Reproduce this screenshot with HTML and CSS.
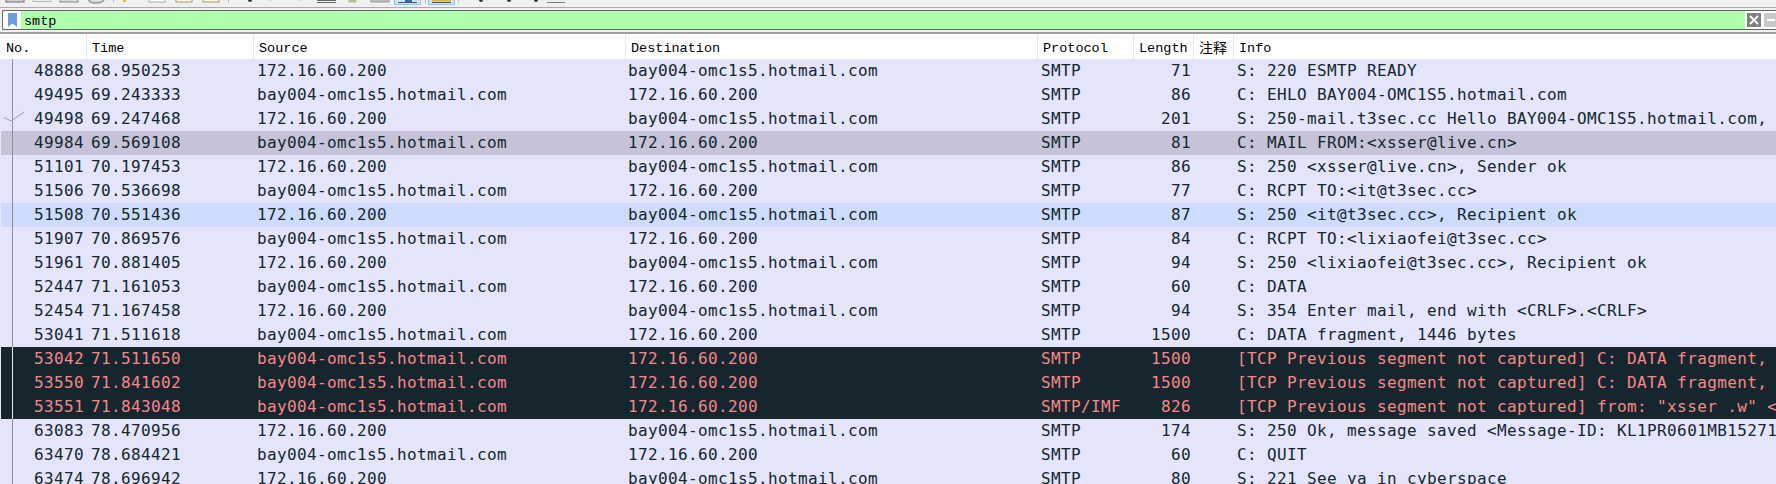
FILE: index.html
```html
<!DOCTYPE html>
<html lang="en">
<head>
<meta charset="utf-8">
<title>smtp</title>
<link rel="stylesheet" href="styles.css">
</head>
<body>
<div class="toolbar">
  <svg class="toolbar-icons" width="600" height="7" viewBox="0 0 600 7">
    <rect x="6" y="-2" width="18" height="4" fill="#cfcfcf" stroke="#6e6e6e"/>
    <rect x="33" y="-2" width="18" height="3.500" fill="#ececec" stroke="#b8b8b8"/>
    <rect x="60" y="-2" width="18" height="4" fill="#dcdcdc" stroke="#8a8a8a"/>
    <path d="M88.500 0C91 4 101 4 104 0" fill="#ddd" stroke="#999" stroke-width="1.500"/>
    <rect x="113" y="0" width="1" height="3" fill="#c0c0c0"/>
    <rect x="123" y="0" width="3" height="2" fill="#eebd44"/>
    <rect x="149" y="-2" width="16" height="4" fill="#fff" stroke="#a8a8a8"/>
    <rect x="176" y="-2" width="16" height="4" fill="#fff8dc" stroke="#a09a80"/>
    <rect x="203" y="-2" width="16" height="4" fill="#fff8dc" stroke="#a09a80"/>
    <rect x="228" y="0" width="1" height="3" fill="#c0c0c0"/>
    <circle cx="250" cy="0" r="2" fill="#333"/>
    <circle cx="270" cy="0" r="1" fill="#ccc"/>
    <circle cx="300" cy="0" r="1" fill="#ccc"/>
    <rect x="317" y="0" width="19" height="1" fill="#666"/>
    <rect x="317" y="2" width="19" height="1" fill="#666"/>
    <rect x="349" y="-1" width="7" height="3" fill="#9dc87a" stroke="#b8b8b8"/>
    <rect x="371" y="-1" width="18" height="3" fill="#bdbdbd" stroke="#999"/>
    <rect x="394.500" y="-2" width="26" height="6.500" fill="#cce4f7" stroke="#8cc4ef"/>
    <rect x="398" y="2" width="19" height="1" fill="#555"/>
    <rect x="405" y="0" width="7" height="2" fill="#2a6cb0"/>
    <rect x="425" y="0" width="1" height="4" fill="#c8c8c8"/>
    <rect x="428.500" y="-2" width="26" height="6.500" fill="#cce4f7" stroke="#8cc4ef"/>
    <rect x="432" y="0" width="19" height="1.500" fill="#dcb440"/>
    <rect x="432" y="2" width="19" height="1" fill="#555"/>
    <rect x="458" y="0" width="1" height="3" fill="#c0c0c0"/>
    <circle cx="481" cy="0" r="2" fill="#333"/>
    <circle cx="509" cy="0" r="2" fill="#333"/>
    <circle cx="536" cy="0" r="2" fill="#333"/>
    <rect x="547" y="2" width="18" height="1" fill="#777"/>
  </svg>
</div>
<div class="filter">
  <span class="bookmark"><svg width="9" height="14" viewBox="0 0 9 14"><path d="M0 0H9V14L4.500 10.500L0 14Z" fill="#6a9fdc"/></svg></span>
  <span class="filter-text">smtp</span>
  <span class="filter-actions">
    <span class="filter-x"><svg width="14" height="14" viewBox="0 0 14 14"><path d="M3 3L11 11M11 3L3 11" stroke="#fff" stroke-width="2"/></svg></span>
    <span class="filter-minus"><svg width="14" height="14" viewBox="0 0 14 14"><path d="M3 7H11" stroke="#fff" stroke-width="2"/></svg></span>
  </span>
</div>
<div class="table">
  <div class="row head">
    <span class="c no">No.</span><span class="c time">Time</span><span class="c src">Source</span><span class="c dst">Destination</span><span class="c proto">Protocol</span><span class="c len">Length</span><span class="c note">注释</span><span class="c info">Info</span>
  </div>
  <div class="row"><span class="c no">48888</span><span class="c time">68.950253</span><span class="c src">172.16.60.200</span><span class="c dst">bay004-omc1s5.hotmail.com</span><span class="c proto">SMTP</span><span class="c len">71</span><span class="c note"></span><span class="c info">S: 220 ESMTP READY</span></div>
  <div class="row"><span class="c no">49495</span><span class="c time">69.243333</span><span class="c src">bay004-omc1s5.hotmail.com</span><span class="c dst">172.16.60.200</span><span class="c proto">SMTP</span><span class="c len">86</span><span class="c note"></span><span class="c info">C: EHLO BAY004-OMC1S5.hotmail.com</span></div>
  <div class="row"><svg class="tick" width="24" height="12" viewBox="0 0 24 12"><path d="M3 6.500L10 10L23 1" fill="none" stroke="#9c9ca8"/></svg><span class="c no">49498</span><span class="c time">69.247468</span><span class="c src">172.16.60.200</span><span class="c dst">bay004-omc1s5.hotmail.com</span><span class="c proto">SMTP</span><span class="c len">201</span><span class="c note"></span><span class="c info">S: 250-mail.t3sec.cc Hello BAY004-OMC1S5.hotmail.com,</span></div>
  <div class="row grey"><span class="c no">49984</span><span class="c time">69.569108</span><span class="c src">bay004-omc1s5.hotmail.com</span><span class="c dst">172.16.60.200</span><span class="c proto">SMTP</span><span class="c len">81</span><span class="c note"></span><span class="c info">C: MAIL FROM:&lt;xsser@live.cn&gt;</span></div>
  <div class="row"><span class="c no">51101</span><span class="c time">70.197453</span><span class="c src">172.16.60.200</span><span class="c dst">bay004-omc1s5.hotmail.com</span><span class="c proto">SMTP</span><span class="c len">86</span><span class="c note"></span><span class="c info">S: 250 &lt;xsser@live.cn&gt;, Sender ok</span></div>
  <div class="row"><span class="c no">51506</span><span class="c time">70.536698</span><span class="c src">bay004-omc1s5.hotmail.com</span><span class="c dst">172.16.60.200</span><span class="c proto">SMTP</span><span class="c len">77</span><span class="c note"></span><span class="c info">C: RCPT TO:&lt;it@t3sec.cc&gt;</span></div>
  <div class="row sel"><span class="c no">51508</span><span class="c time">70.551436</span><span class="c src">172.16.60.200</span><span class="c dst">bay004-omc1s5.hotmail.com</span><span class="c proto">SMTP</span><span class="c len">87</span><span class="c note"></span><span class="c info">S: 250 &lt;it@t3sec.cc&gt;, Recipient ok</span></div>
  <div class="row"><span class="c no">51907</span><span class="c time">70.869576</span><span class="c src">bay004-omc1s5.hotmail.com</span><span class="c dst">172.16.60.200</span><span class="c proto">SMTP</span><span class="c len">84</span><span class="c note"></span><span class="c info">C: RCPT TO:&lt;lixiaofei@t3sec.cc&gt;</span></div>
  <div class="row"><span class="c no">51961</span><span class="c time">70.881405</span><span class="c src">172.16.60.200</span><span class="c dst">bay004-omc1s5.hotmail.com</span><span class="c proto">SMTP</span><span class="c len">94</span><span class="c note"></span><span class="c info">S: 250 &lt;lixiaofei@t3sec.cc&gt;, Recipient ok</span></div>
  <div class="row"><span class="c no">52447</span><span class="c time">71.161053</span><span class="c src">bay004-omc1s5.hotmail.com</span><span class="c dst">172.16.60.200</span><span class="c proto">SMTP</span><span class="c len">60</span><span class="c note"></span><span class="c info">C: DATA</span></div>
  <div class="row"><span class="c no">52454</span><span class="c time">71.167458</span><span class="c src">172.16.60.200</span><span class="c dst">bay004-omc1s5.hotmail.com</span><span class="c proto">SMTP</span><span class="c len">94</span><span class="c note"></span><span class="c info">S: 354 Enter mail, end with &lt;CRLF&gt;.&lt;CRLF&gt;</span></div>
  <div class="row"><span class="c no">53041</span><span class="c time">71.511618</span><span class="c src">bay004-omc1s5.hotmail.com</span><span class="c dst">172.16.60.200</span><span class="c proto">SMTP</span><span class="c len">1500</span><span class="c note"></span><span class="c info">C: DATA fragment, 1446 bytes</span></div>
  <div class="row dark"><span class="c no">53042</span><span class="c time">71.511650</span><span class="c src">bay004-omc1s5.hotmail.com</span><span class="c dst">172.16.60.200</span><span class="c proto">SMTP</span><span class="c len">1500</span><span class="c note"></span><span class="c info">[TCP Previous segment not captured] C: DATA fragment,</span></div>
  <div class="row dark"><span class="c no">53550</span><span class="c time">71.841602</span><span class="c src">bay004-omc1s5.hotmail.com</span><span class="c dst">172.16.60.200</span><span class="c proto">SMTP</span><span class="c len">1500</span><span class="c note"></span><span class="c info">[TCP Previous segment not captured] C: DATA fragment,</span></div>
  <div class="row dark"><span class="c no">53551</span><span class="c time">71.843048</span><span class="c src">bay004-omc1s5.hotmail.com</span><span class="c dst">172.16.60.200</span><span class="c proto">SMTP/IMF</span><span class="c len">826</span><span class="c note"></span><span class="c info">[TCP Previous segment not captured] from: "xsser .w" &lt;</span></div>
  <div class="row"><span class="c no">63083</span><span class="c time">78.470956</span><span class="c src">172.16.60.200</span><span class="c dst">bay004-omc1s5.hotmail.com</span><span class="c proto">SMTP</span><span class="c len">174</span><span class="c note"></span><span class="c info">S: 250 Ok, message saved &lt;Message-ID: KL1PR0601MB15271</span></div>
  <div class="row"><span class="c no">63470</span><span class="c time">78.684421</span><span class="c src">bay004-omc1s5.hotmail.com</span><span class="c dst">172.16.60.200</span><span class="c proto">SMTP</span><span class="c len">60</span><span class="c note"></span><span class="c info">C: QUIT</span></div>
  <div class="row"><span class="c no">63474</span><span class="c time">78.696942</span><span class="c src">172.16.60.200</span><span class="c dst">bay004-omc1s5.hotmail.com</span><span class="c proto">SMTP</span><span class="c len">80</span><span class="c note"></span><span class="c info">S: 221 See ya in cyberspace</span></div>
</div>
</body>
</html>
```
FILE: styles.css
```css
html, body { margin: 0; padding: 0; }
body { width: 1776px; height: 484px; overflow: hidden; background: #f0f0f0; font-family: "DejaVu Sans Mono", monospace; }

.toolbar { height: 7px; background: #f0f0f0; border-bottom: 1px solid #ababab; overflow: hidden; }
.toolbar-icons { display: block; }

.filter { height: 18px; margin: 2px 0 0 2px; background: #afffaf; border: 1px solid #666; border-right: 0; border-radius: 2px 0 0 2px; display: flex; align-items: stretch; }
.bookmark { width: 18px; background: #fff; display: flex; align-items: center; justify-content: center; flex: none; border-radius: 2px 0 0 2px; }
.filter-text { flex: 1; padding-left: 3px; font: 13.500px/22px "Liberation Mono", monospace; color: #000; }
.filter-actions { width: 31px; background: #fff; display: flex; align-items: center; gap: 3px; padding-left: 2px; box-sizing: border-box; overflow: hidden; flex: none; }
.filter-x { display: block; width: 14px; height: 14px; background: #7f7f7f; flex: none; }
.filter-minus { display: block; width: 14px; height: 14px; background: #c8c8c8; flex: none; }
.filter-x svg, .filter-minus svg { display: block; }

.table { border-top: 2px solid #a0a0a0; margin-top: 2px; }

.row { position: relative; display: flex; height: 24px; background: #e4e4fb; color: #12272e; font-size: 16px; letter-spacing: 0.370px; white-space: nowrap; border-left: 1px solid #e8e8f0; box-sizing: border-box; }
.row::before { content: ""; position: absolute; left: 11px; top: 0; bottom: 0; width: 1px; background: #8e8e98; }
.row.grey { background: #c6c3d8; }
.row.sel { background: #cddcfc; }
.row.dark { background: #16262f; color: #f78787; }
.row.dark::before { background: #e4e4fb; }
.tick { position: absolute; left: 0; top: 4px; }

.c { display: block; flex: none; height: 100%; line-height: 23px; padding-left: 4px; box-sizing: border-box; }
.no { width: 86px; text-align: right; padding-right: 3px; }
.time { width: 166px; }
.src { width: 371px; }
.dst { width: 413px; }
.proto { width: 97px; }
.len { width: 60px; text-align: right; padding-right: 3px; }
.note { width: 39px; }
.info { flex: 1; overflow: hidden; }

.row.head { height: 25px; background: #fff; color: #000; border-left: 0; font: 13.500px/1 "Liberation Mono", "Noto Sans CJK SC", monospace; letter-spacing: 0; }
.row.head::before { display: none; }
.head .c { text-align: left; line-height: 29px; padding: 0 0 0 5px; border-right: 1px solid #e6e6e6; }
.head .no { width: 87px; padding-left: 6px; }
.head .time { width: 167px; }
.head .src { width: 372px; }
.head .dst { width: 412px; }
.head .proto { width: 96px; }
.head .len { width: 60px; }
.head .note { width: 40px; font-family: "Noto Sans CJK SC", sans-serif; font-size: 14px; line-height: 27px; }
.head .info { border-right: 0; }
```
